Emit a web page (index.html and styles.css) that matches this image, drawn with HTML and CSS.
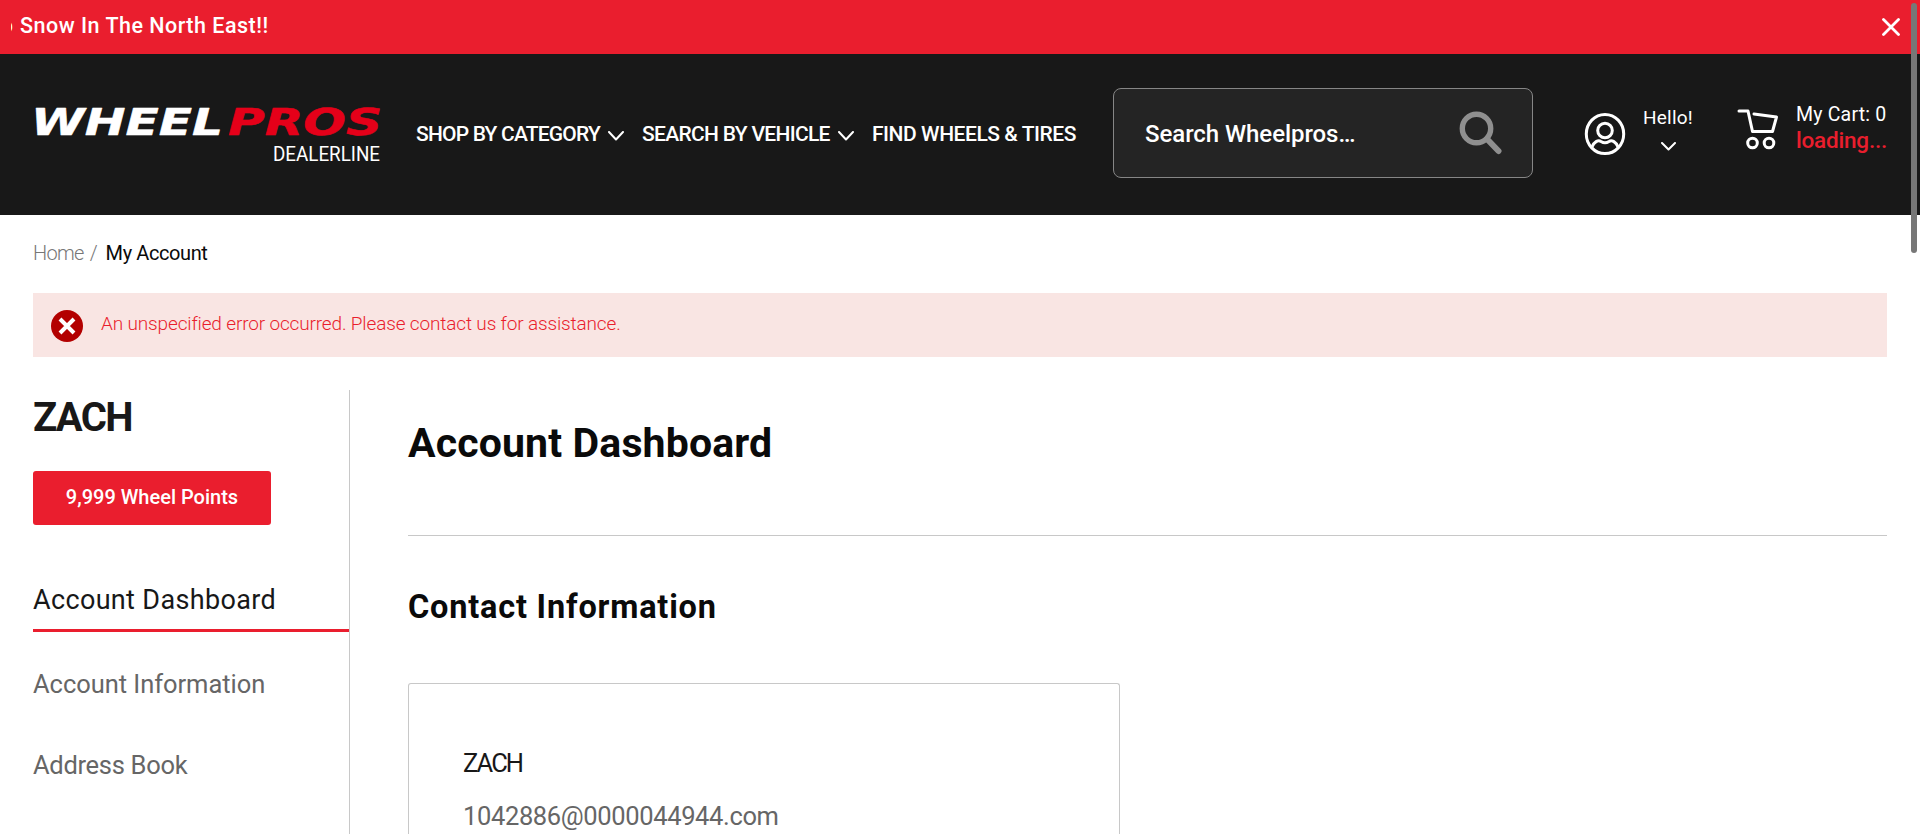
FILE: index.html
```
<!DOCTYPE html>
<html lang="en"><head><meta charset="utf-8"><title>My Account</title><link rel="stylesheet" href="styles.css"></head>
<body>
<div class="banner"><div class="ticker"><span class="tail">o</span><span class="ticker-text">Snow In The North East!!</span></div>
<svg class="close" viewBox="0 0 18 18"><path d="M1.5 1.5l15 15M16.5 1.5l-15 15"/></svg></div>
<header class="header">
<svg class="logo" viewBox="0 0 350 60"><text class="logo-wheel" x="-2" y="29" textLength="192" lengthAdjust="spacingAndGlyphs">WHEEL</text><text class="logo-pros" x="195" y="29" textLength="154" lengthAdjust="spacingAndGlyphs">PROS</text><text class="logo-sub" x="240" y="55" textLength="107" lengthAdjust="spacingAndGlyphs">DEALERLINE</text></svg>
<nav class="nav"><a class="nav-a">SHOP BY CATEGORY</a><svg class="chev" viewBox="0 0 16 10"><path d="M1 1l7 7.5L15 1"/></svg><a class="nav-b">SEARCH BY VEHICLE</a><svg class="chev" viewBox="0 0 16 10"><path d="M1 1l7 7.5L15 1"/></svg><a class="nav-c">FIND WHEELS &amp; TIRES</a></nav>
<div class="search"><span class="search-text">Search Wheelpros…</span><svg class="glass" viewBox="0 0 44 44"><circle cx="17.5" cy="17.5" r="14.2"/><path d="M28 28l11.500 12" stroke-width="6"/></svg></div>
<svg class="user" viewBox="0 0 42 44"><ellipse cx="21" cy="22" rx="18.7" ry="19.6"/><circle cx="21" cy="18.5" r="7.3"/><path d="M8 35c2-5 6-7.5 9-5.500q4 2.500 8 0c3-2 7 .5 9 5.500"/></svg>
<div class="hello"><span class="hello-text">Hello!</span><svg class="chev-s" viewBox="0 0 15 9"><path d="M1 1l6.500 6.500L14 1"/></svg></div>
<svg class="cart" viewBox="0 0 42 42"><path d="M2 3h9l4.500 20.500h20L39.500 9 17 6"/><circle cx="15.500" cy="35" r="4.800"/><circle cx="32" cy="35" r="4.800"/></svg>
<div class="cart-info"><span class="cart-text">My Cart: 0</span><span class="loading">loading...</span></div>
</header>
<div class="crumbs"><span class="home">Home</span><span class="slash">/</span><span class="here">My Account</span></div>
<div class="error"><svg class="error-icon" viewBox="0 0 32 32"><circle cx="16" cy="16" r="16"/><path d="M9 9l14 14M23 9L9 23"/></svg><span class="error-text">An unspecified error occurred. Please contact us for assistance.</span></div>
<div class="page">
<aside class="side"><div class="name">ZACH</div><div class="points">9,999 Wheel Points</div>
<div class="item active">Account Dashboard</div><div class="item">Account Information</div><div class="item item-c">Address Book</div></aside>
<main class="main"><h1>Account Dashboard</h1><h2>Contact Information</h2>
<div class="card"><div class="card-name">ZACH</div><div class="card-mail">1042886@0000044944.com</div></div></main>
</div>
<div class="scrollbar"></div>
</body></html>
```
FILE: styles.css
```
* { box-sizing: border-box; }
body { margin: 0; height: 834px; overflow: hidden; background: #fff; color: #181818; font-family: Roboto, "Liberation Sans", sans-serif; white-space: nowrap; }
svg { display: block; flex: none; fill: none; stroke: #fff; stroke-width: 2; stroke-linecap: round; stroke-linejoin: round; }
.banner { height: 54px; padding: 0 20px 0 11px; display: flex; align-items: center; justify-content: space-between; background: #ea1e2e; color: #fff; }
.ticker { display: flex; font-size: 21.5px; line-height: 52px; height: 54px; font-weight: 500; letter-spacing: .5px; }
.tail { width: 2px; margin-right: 7px; overflow: hidden; display: flex; justify-content: flex-end; letter-spacing: 0; }
.close { width: 18px; height: 18px; stroke-width: 2.8; }
.header { height: 161px; padding-left: 33px; display: flex; align-items: flex-start; background: #181818; color: #fff; }
.logo { width: 350px; height: 60px; margin-top: 52px; overflow: visible; }
.logo text { stroke: #fff; stroke-width: .5; fill: #fff; }
.logo-wheel, .logo-pros { font: italic bold 36.5px "DejaVu Sans", sans-serif; }
.logo .logo-pros { fill: #e50019; stroke: #e50019; }
.logo .logo-sub { font: 21px Roboto, sans-serif; stroke: none; }
.nav { display: flex; align-items: center; margin: 59px 0 0 33px; width: 661px; height: 42px; font-size: 21px; font-weight: 500; }
.nav-a { width: 185px; letter-spacing: -.8px; }
.nav-b { width: 189px; letter-spacing: -.69px; }
.nav-c { width: 205px; letter-spacing: -.45px; }
.chev { width: 16px; height: 10px; margin: 4px 18px 0 7px; }
.search { margin: 34px 0 0 36px; width: 420px; height: 90px; border: 1px solid #868686; border-radius: 8px; background: #242424; padding: 0 29px 0 31px; display: flex; align-items: center; justify-content: space-between; font-size: 24px; font-weight: 500; }
.search-text { padding-top: 2px; letter-spacing: -.06px; }
.glass { width: 44px; height: 44px; stroke: #8f8f8f; stroke-width: 5.4; margin-top: -1px; }
.user { width: 42px; height: 44px; margin: 58px 0 0 51px; stroke-width: 3; }
.hello { width: 50px; margin: 52px 0 0 17px; font-size: 19px; line-height: 24px; letter-spacing: .23px; display: flex; flex-direction: column; align-items: center; }
.chev-s { width: 15px; height: 9px; margin-top: 12px; }
.cart { width: 42px; height: 42px; margin: 54px 0 0 44px; stroke-width: 3; }
.cart-info { margin: 49px 0 0 17px; display: flex; flex-direction: column; align-items: flex-start; font-size: 19.5px; line-height: 24px; letter-spacing: .2px; }
.loading { color: #e91e2d; font-size: 22.5px; font-weight: 500; line-height: 27px; letter-spacing: -.2px; }
.crumbs { margin-left: 33px; padding-top: 26px; height: 78px; display: flex; font-size: 20px; line-height: 24px; }
.home, .slash { color: #777; font-weight: 300; }
.home { letter-spacing: -.7px; }
.slash { margin: 0 8px 0 6px; }
.here { color: #0a0a0a; letter-spacing: -.4px; }
.error { margin: 0 33px; height: 64px; padding-left: 18px; display: flex; align-items: center; background: #f9e5e3; color: #e91e2d; font-size: 19px; font-weight: 300; letter-spacing: -.15px; }
.error-icon { width: 32px; height: 32px; margin: 2px 18px 0 0; stroke-width: 4; stroke-linecap: butt; }
.error-icon circle { fill: #b30000; stroke: none; }
.error-text { margin-top: -3px; }
.page { display: flex; height: 444px; margin: 33px 33px 0; overflow: hidden; }
.side { width: 317px; border-right: 1px solid #c8c8c8; }
.name { font-size: 40px; line-height: 54px; font-weight: 700; height: 81px; padding-top: 1px; letter-spacing: -1.7px; }
.points { width: 238px; height: 54px; border-radius: 3px; background: #ea1e2e; color: #fff; font-size: 20px; font-weight: 500; line-height: 53px; text-align: center; }
.item { font-size: 25.5px; line-height: 40px; padding: 32px 0 9px; color: #666; letter-spacing: -.05px; }
.item-c { letter-spacing: -.3px; }
.active { font-size: 27px; color: #181818; margin-top: 23px; border-bottom: 3px solid #ea1e2e; letter-spacing: .34px; }
.main { margin-left: 58px; flex: 1; color: #0a0a0a; }
h1 { margin: 0; height: 146px; padding-top: 28px; border-bottom: 1px solid #c8c8c8; font-size: 41px; line-height: 50px; letter-spacing: .14px; }
h2 { margin: 0; height: 147px; padding-top: 50px; font-size: 32.5px; line-height: 42px; letter-spacing: .8px; }
.card { width: 712px; height: 151px; border: 1px solid #c8c8c8; border-bottom: 0; border-radius: 3px 3px 0 0; padding: 59px 54px 0; font-size: 25.5px; line-height: 40px; color: #181818; }
.card-name { letter-spacing: -1.9px; }
.card-mail { margin-top: 13px; height: 38px; color: #666; letter-spacing: -.36px; }
.scrollbar { position: absolute; left: 1911px; top: 3px; width: 6px; height: 250px; border-radius: 3px; background: #777; }
```
